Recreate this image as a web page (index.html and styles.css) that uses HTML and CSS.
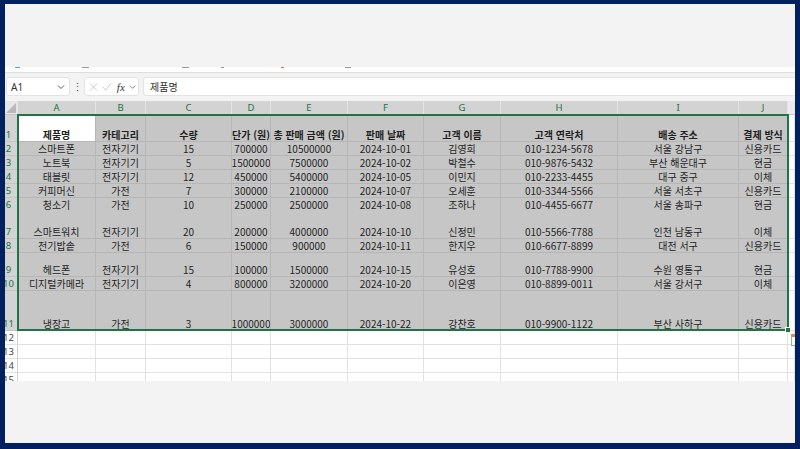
FILE: index.html
```html
<!DOCTYPE html>
<html lang="ko">
<head>
	<meta charset="UTF-8">
	<title>판매 데이터</title>
	<link rel="stylesheet" href="styles.css">
</head>
<body>
	<div class="frame">
		<!-- 리본 영역 (잘림) -->
		<div class="ribbon"></div>
		<div class="ribbon-edge">
			<i class="mark m1"></i><i class="mark m2"></i><i class="mark m3"></i><i class="mark m4"></i><i class="mark m5"></i><i class="mark m6"></i>
		</div>
		<!-- 수식 입력줄 -->
		<div class="fbar">
			<div class="namebox"><span>A1</span><svg width="8" height="6" viewBox="0 0 8 6"><path d="M1 1.5 L4 4.5 L7 1.5" fill="none" stroke="#555" stroke-width="1"/></svg></div>
			<div class="dots">⋮</div>
			<div class="fxbox">
				<svg width="10" height="10" viewBox="0 0 10 10"><path d="M1 1 L9 9 M9 1 L1 9" stroke="#c3c3c3" stroke-width="1"/></svg>
				<svg width="11" height="10" viewBox="0 0 11 10"><path d="M1 5 L4 8.5 L10 1" fill="none" stroke="#c3c3c3" stroke-width="1"/></svg>
				<span class="fx">fx</span>
				<svg width="8" height="6" viewBox="0 0 8 6"><path d="M1 1.5 L4 4.5 L7 1.5" fill="none" stroke="#777" stroke-width="1"/></svg>
			</div>
			<div class="formula">제품명</div>
		</div>
		<!-- 시트 -->
		<div class="sheet">
			<div class="row colhead">
				<div class="c corner"><svg width="11" height="11" viewBox="0 0 11 11"><path d="M11 1 L11 11 L1 11 Z" fill="#b9b9b9"/></svg></div>
				<div class="c">A</div><div class="c">B</div><div class="c">C</div><div class="c">D</div><div class="c">E</div><div class="c">F</div><div class="c">G</div><div class="c">H</div><div class="c">I</div><div class="c">J</div><div class="c blank"></div>
			</div>
			<div class="row sel h27 bold">
				<div class="c rh">1</div>
				<div class="c active">제품명</div><div class="c">카테고리</div><div class="c">수량</div><div class="c">단가 (원)</div><div class="c">총 판매 금액 (원)</div><div class="c">판매 날짜</div><div class="c">고객 이름</div><div class="c">고객 연락처</div><div class="c">배송 주소</div><div class="c">결제 방식</div><div class="c out"></div>
			</div>
			<div class="row sel h14">
				<div class="c rh">2</div>
				<div class="c">스마트폰</div><div class="c">전자기기</div><div class="c">15</div><div class="c">700000</div><div class="c">10500000</div><div class="c">2024-10-01</div><div class="c">김영희</div><div class="c">010-1234-5678</div><div class="c">서울 강남구</div><div class="c">신용카드</div><div class="c out"></div>
			</div>
			<div class="row sel h14">
				<div class="c rh">3</div>
				<div class="c">노트북</div><div class="c">전자기기</div><div class="c">5</div><div class="c">1500000</div><div class="c">7500000</div><div class="c">2024-10-02</div><div class="c">박철수</div><div class="c">010-9876-5432</div><div class="c">부산 해운대구</div><div class="c">현금</div><div class="c out"></div>
			</div>
			<div class="row sel h14">
				<div class="c rh">4</div>
				<div class="c">태블릿</div><div class="c">전자기기</div><div class="c">12</div><div class="c">450000</div><div class="c">5400000</div><div class="c">2024-10-05</div><div class="c">이민지</div><div class="c">010-2233-4455</div><div class="c">대구 중구</div><div class="c">이체</div><div class="c out"></div>
			</div>
			<div class="row sel h14">
				<div class="c rh">5</div>
				<div class="c">커피머신</div><div class="c">가전</div><div class="c">7</div><div class="c">300000</div><div class="c">2100000</div><div class="c">2024-10-07</div><div class="c">오세훈</div><div class="c">010-3344-5566</div><div class="c">서울 서초구</div><div class="c">신용카드</div><div class="c out"></div>
			</div>
			<div class="row sel h13">
				<div class="c rh">6</div>
				<div class="c">청소기</div><div class="c">가전</div><div class="c">10</div><div class="c">250000</div><div class="c">2500000</div><div class="c">2024-10-08</div><div class="c">조하나</div><div class="c">010-4455-6677</div><div class="c">서울 송파구</div><div class="c">현금</div><div class="c out"></div>
			</div>
			<div class="row sel h28">
				<div class="c rh">7</div>
				<div class="c">스마트워치</div><div class="c">전자기기</div><div class="c">20</div><div class="c">200000</div><div class="c">4000000</div><div class="c">2024-10-10</div><div class="c">신정민</div><div class="c">010-5566-7788</div><div class="c">인천 남동구</div><div class="c">이체</div><div class="c out"></div>
			</div>
			<div class="row sel h14">
				<div class="c rh">8</div>
				<div class="c">전기밥솥</div><div class="c">가전</div><div class="c">6</div><div class="c">150000</div><div class="c">900000</div><div class="c">2024-10-11</div><div class="c">한지우</div><div class="c">010-6677-8899</div><div class="c">대전 서구</div><div class="c">신용카드</div><div class="c out"></div>
			</div>
			<div class="row sel h24">
				<div class="c rh">9</div>
				<div class="c">헤드폰</div><div class="c">전자기기</div><div class="c">15</div><div class="c">100000</div><div class="c">1500000</div><div class="c">2024-10-15</div><div class="c">유성호</div><div class="c">010-7788-9900</div><div class="c">수원 영통구</div><div class="c">현금</div><div class="c out"></div>
			</div>
			<div class="row sel h14">
				<div class="c rh">10</div>
				<div class="c">디지털카메라</div><div class="c">전자기기</div><div class="c">4</div><div class="c">800000</div><div class="c">3200000</div><div class="c">2024-10-20</div><div class="c">이은영</div><div class="c">010-8899-0011</div><div class="c">서울 강서구</div><div class="c">이체</div><div class="c out"></div>
			</div>
			<div class="row sel h40">
				<div class="c rh">11</div>
				<div class="c">냉장고</div><div class="c">가전</div><div class="c">3</div><div class="c">1000000</div><div class="c">3000000</div><div class="c">2024-10-22</div><div class="c">강찬호</div><div class="c">010-9900-1122</div><div class="c">부산 사하구</div><div class="c">신용카드</div><div class="c out"></div>
			</div>
			<div class="row h14">
				<div class="c rh">12</div>
				<div class="c"></div><div class="c"></div><div class="c"></div><div class="c"></div><div class="c"></div><div class="c"></div><div class="c"></div><div class="c"></div><div class="c"></div><div class="c"></div><div class="c"></div>
			</div>
			<div class="row h14">
				<div class="c rh">13</div>
				<div class="c"></div><div class="c"></div><div class="c"></div><div class="c"></div><div class="c"></div><div class="c"></div><div class="c"></div><div class="c"></div><div class="c"></div><div class="c"></div><div class="c"></div>
			</div>
			<div class="row h14">
				<div class="c rh">14</div>
				<div class="c"></div><div class="c"></div><div class="c"></div><div class="c"></div><div class="c"></div><div class="c"></div><div class="c"></div><div class="c"></div><div class="c"></div><div class="c"></div><div class="c"></div>
			</div>
			<div class="row h14">
				<div class="c rh">15</div>
				<div class="c"></div><div class="c"></div><div class="c"></div><div class="c"></div><div class="c"></div><div class="c"></div><div class="c"></div><div class="c"></div><div class="c"></div><div class="c"></div><div class="c"></div>
			</div>
			<!-- 선택 영역 테두리 -->
			<div class="selbox"><span class="handle"></span></div>
			<div class="quick"></div>
		</div>
	</div>
</body>
</html>
```

FILE: styles.css
```css
*{
	margin:0;
	padding:0;
	box-sizing:border-box;
}
body{
	background:#012060;
	font-family:"Noto Sans CJK KR","Noto Sans",sans-serif;
	color:#1f1f1f;
}
.frame{
	margin:4px 5px 6px 5px;
	height:439px;
	background:#f3f3f3;
	overflow:hidden;
}
.ribbon{
	height:63px;
}
.ribbon-edge{
	height:6px;
	background:#fff;
	border-bottom:1px solid #dedede;
	position:relative;
}
.mark{
	position:absolute;
	top:0;
	height:1px;
	background:#999;
}
.m1{left:10px;width:5px;background:#5b9bd5;}
.m2{left:77px;width:7px;}
.m3{left:177px;width:7px;}
.m4{left:216px;width:3px;}
.m5{left:276px;width:3px;background:#e06060;}
.m6{left:340px;width:6px;}

/* 수식 입력줄 */
.fbar{
	display:flex;
	align-items:center;
	height:28px;
	padding:4px 0 5px 1px;
}
.namebox{
	width:64px;
	height:19px;
	background:#fff;
	border:1px solid #e3e3e3;
	border-radius:3px;
	display:flex;
	align-items:center;
	justify-content:space-between;
	padding:0 4px 0 4px;
	font-family:"Noto Sans",sans-serif;
	font-size:10px;
	color:#333;
}
.dots{
	width:14px;
	text-align:center;
	font-size:11px;
	color:#555;
	line-height:19px;
}
.fxbox{
	width:55px;
	height:19px;
	background:#fff;
	border:1px solid #e3e3e3;
	border-radius:3px;
	display:flex;
	align-items:center;
	gap:4px;
	padding:0 2px 0 4px;
}
.fx{
	font-family:"Liberation Serif",serif;
	font-style:italic;
	font-size:11px;
	color:#333;
	margin-left:1px;
}
.formula{
	flex:1;
	height:19px;
	margin-left:4px;
	background:#fff;
	border:1px solid #e3e3e3;
	border-right:none;
	border-radius:3px 0 0 3px;
	font-size:10px;
	line-height:17px;
	padding-left:6px;
	color:#333;
}

/* 시트 */
.sheet{
	position:relative;
	height:280px;
	background:#fff;
	overflow:hidden;
}
.row{
	display:grid;
	grid-template-columns:13px 78px 50px 86px 39px 77px 76px 77px 117px 121px 49px 7px;
	height:14px;
}
.h13{height:13px;}
.h14{height:14px;}
.h24{height:24px;}
.h27{height:27px;}
.h28{height:28px;}
.h40{height:40px;}
.c{
	border-right:1px solid #e1e1e1;
	border-bottom:1px solid #e1e1e1;
	display:flex;
	align-items:flex-end;
	justify-content:center;
	font-size:10px;
	line-height:13px;
	white-space:nowrap;
	overflow:hidden;
}
.colhead .c{
	background:#d3d3d3;
	border-right-color:#e4e4e4;
	border-bottom-color:#c4c4c4;
	color:#217346;
	font-family:"Noto Sans",sans-serif;
	font-size:9.5px;
	align-items:center;
}
.colhead .corner{
	background:#e6e6e6;
	justify-content:flex-end;
	align-items:flex-end;
	padding:0 1px 1px 0;
}
.colhead .blank{
	background:#ececec;
}
.rh{
	justify-content:center;
	padding-right:5px;
	overflow:visible;
	color:#444;
	font-family:"Noto Sans",sans-serif;
	font-size:9.5px;
	background:#fff;
	border-right-color:#d0d0d0;
}
.sel .c{
	background:#c6c6c6;
	border-color:#b6b6b6;
}
.sel .rh{
	background:#d3d3d3;
	color:#217346;
	border-right-color:#c4c4c4;
	border-bottom-color:#c4c4c4;
}
.sel .active{
	background:#fff;
}
.sel .out{
	background:#fff;
	border-color:#e1e1e1;
}
.bold .c{
	font-weight:bold;
}
.bold .rh{
	font-weight:normal;
}
.selbox{
	position:absolute;
	left:12px;
	top:13px;
	width:772px;
	height:217px;
	border:2px solid #217346;
}
.handle{
	position:absolute;
	right:-4px;
	bottom:-4px;
	width:6px;
	height:6px;
	background:#217346;
	border:1px solid #fff;
}
.quick{
	position:absolute;
	left:786px;
	top:233px;
	width:10px;
	height:12px;
	border:1px solid #8fb79c;
	background:#fff;
	border-top:3px solid #e8892c;
}
```
